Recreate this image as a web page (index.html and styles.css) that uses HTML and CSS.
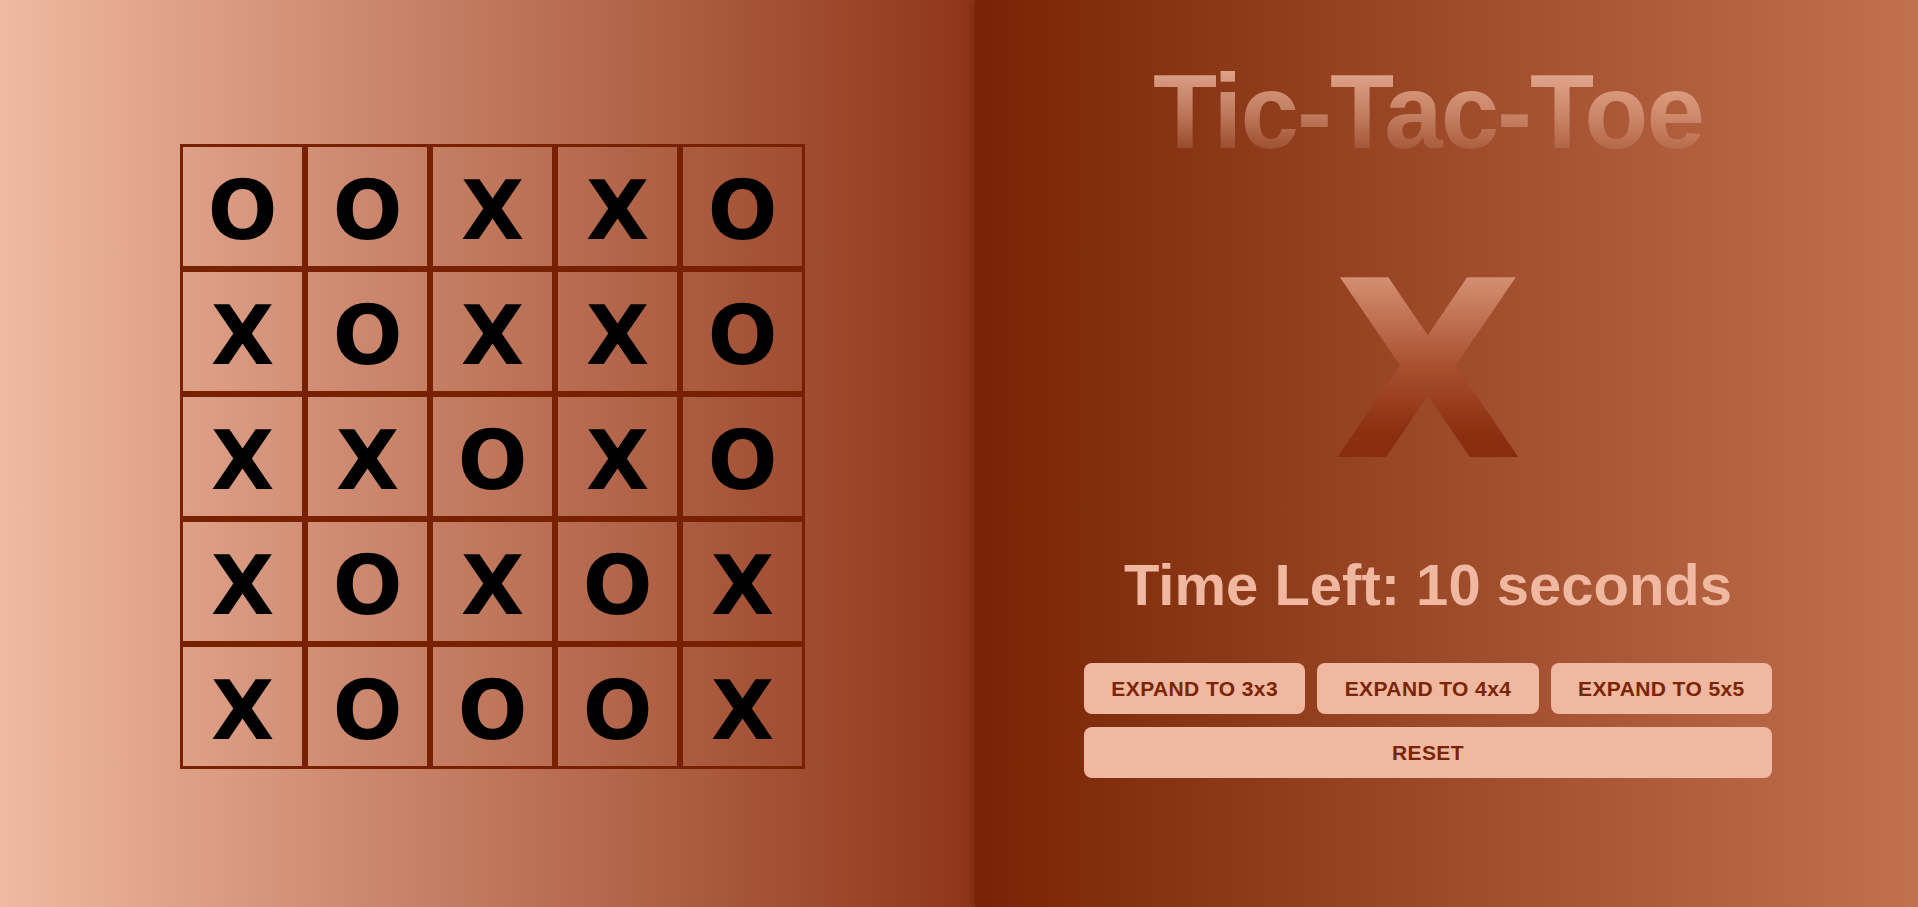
FILE: index.html
```html
<!DOCTYPE html>
<html lang="en">
<head>
<meta charset="utf-8">
<title>Tic-Tac-Toe</title>
<link rel="stylesheet" href="styles.css">
</head>
<body>
<main class="app">
  <section class="board-panel">
    <div class="board">
      <div class="cell">O</div><div class="cell">O</div><div class="cell">X</div><div class="cell">X</div><div class="cell">O</div>
      <div class="cell">X</div><div class="cell">O</div><div class="cell">X</div><div class="cell">X</div><div class="cell">O</div>
      <div class="cell">X</div><div class="cell">X</div><div class="cell">O</div><div class="cell">X</div><div class="cell">O</div>
      <div class="cell">X</div><div class="cell">O</div><div class="cell">X</div><div class="cell">O</div><div class="cell">X</div>
      <div class="cell">X</div><div class="cell">O</div><div class="cell">O</div><div class="cell">O</div><div class="cell">X</div>
    </div>
  </section>
  <section class="info-panel">
    <div class="info">
      <h1 class="title">Tic-Tac-Toe</h1>
      <div class="turn">X</div>
      <p class="timer">Time Left: 10 seconds</p>
      <div class="controls">
        <button class="btn">EXPAND TO 3x3</button>
        <button class="btn">EXPAND TO 4x4</button>
        <button class="btn">EXPAND TO 5x5</button>
        <button class="btn btn-wide">RESET</button>
      </div>
    </div>
  </section>
</main>
</body>
</html>
```
FILE: styles.css
```css
* { box-sizing: border-box; }

html, body {
  margin: 0;
  padding: 0;
  height: 100%;
}

body {
  font-family: "Liberation Sans", Arial, sans-serif;
  overflow: hidden;
}

.app {
  display: flex;
  height: 907px;
}

.board-panel {
  width: 975px;
  flex: none;
  display: flex;
  align-items: center;
  justify-content: center;
  padding: 6px 0 0 10px;
  background: linear-gradient(to right, #f0b9a1 0%, #8f3518 100%);
}

.board {
  display: grid;
  grid-template-columns: repeat(5, 125px);
  grid-template-rows: repeat(5, 125px);
}

.cell {
  border: 3px solid #782100;
  padding-top: 8px;
  display: flex;
  align-items: center;
  justify-content: center;
  font-family: "DejaVu Sans", "Liberation Sans", sans-serif;
  font-weight: 700;
  font-size: 82px;
  line-height: 1;
  color: #000;
}

.info-panel {
  flex: 1;
  position: relative;
  z-index: 1;
  display: flex;
  justify-content: center;
  padding-right: 37px;
  background: linear-gradient(to right, #782404 0%, #c2714f 100%);
  box-shadow: -3px 0 7px rgba(112, 30, 0, 0.55);
}

.info {
  width: 688px;
  display: flex;
  flex-direction: column;
  align-items: center;
}

.title {
  margin: 59px 0 0;
  font-size: 105px;
  line-height: 1;
  font-weight: 700;
  letter-spacing: -2px;
  background: linear-gradient(to bottom,
    rgba(240, 185, 160, 0.82) 12%,
    rgba(240, 185, 160, 0.5) 52%,
    rgba(240, 185, 160, 0.14) 88%);
  -webkit-background-clip: text;
  background-clip: text;
  color: transparent;
}

.turn {
  margin-top: 84px;
  font-family: "DejaVu Sans", "Liberation Sans", sans-serif;
  font-weight: 700;
  font-size: 247px;
  line-height: 1;
  background: linear-gradient(to bottom,
    #d48e71 12%,
    #a9502f 48%,
    #8c3010 74%,
    #862b0c 88%);
  -webkit-background-clip: text;
  background-clip: text;
  color: transparent;
}

.timer {
  margin: 61px 0 0;
  font-size: 58px;
  line-height: 1;
  font-weight: 700;
  color: #f0b8a0;
}

.controls {
  margin-top: 49px;
  width: 100%;
  display: grid;
  grid-template-columns: repeat(3, 1fr);
  column-gap: 12px;
  row-gap: 13px;
}

.btn {
  height: 51px;
  border: none;
  border-radius: 8px;
  background: #f0b8a0;
  color: #7a2404;
  font-family: "Liberation Sans", Arial, sans-serif;
  font-weight: 700;
  font-size: 21px;
  letter-spacing: 0.4px;
  padding: 0;
  cursor: pointer;
}

.btn-wide {
  grid-column: 1 / -1;
}
```
